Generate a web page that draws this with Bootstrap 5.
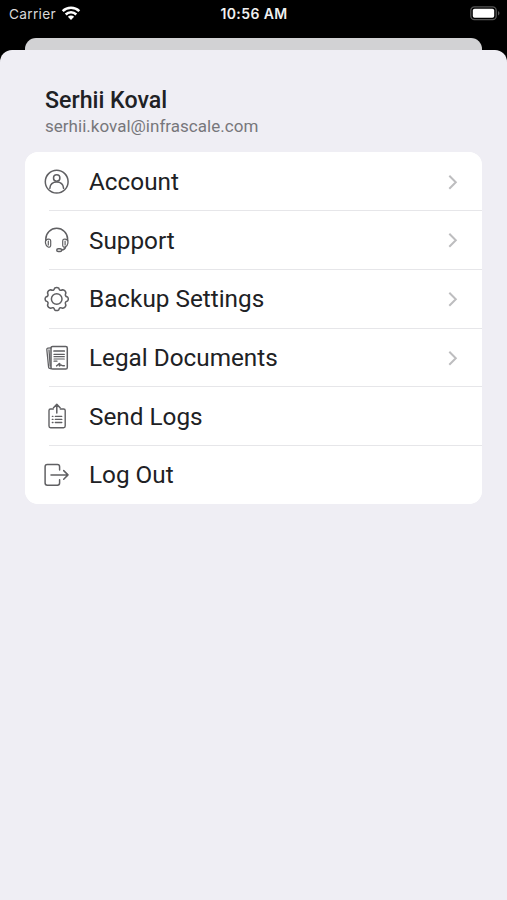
<!DOCTYPE html>
<html lang="en">
<head>
<meta charset="utf-8">
<meta name="viewport" content="width=device-width, initial-scale=1">
<title>Settings</title>
<link href="https://cdn.jsdelivr.net/npm/bootstrap@5.3.0/dist/css/bootstrap.min.css" rel="stylesheet">
<style>
body{background:#000;font-family:Roboto,sans-serif;color:#202124;overflow:hidden}
svg{display:block;flex:none}
.status-bar{height:38px;padding:6px 6px 0 9px;font-family:Inter,sans-serif;color:#fff;line-height:16px}
.status-side{width:100px}
.carrier{font-size:13.7px;letter-spacing:.3px;color:#d8d8d8}
.wifi{margin-left:5px}
.clock{font-size:14px;font-weight:600;letter-spacing:.4px;color:#f0f0f0;margin-right:2px}
.back-sheet{height:12px;margin:0 25px;background:#d2d2d4;border-radius:11px 11px 0 0}
.sheet{background:#efeef4;border-radius:12px 12px 0 0;padding:36px 25px 0}
.profile{padding-left:20px;height:66.200px}
.profile-name{font-size:23.2px;line-height:28px;font-weight:500}
.profile-mail{font-size:17px;letter-spacing:.02px;line-height:20px;color:#77777b;margin-top:2px}
.menu{--bs-list-group-border-radius:13px;height:352px;overflow:hidden;background:#fff}
.menu .list-group-item{flex:1 1 0;padding:0 19px 0 19px;border:0;color:#202124;background:#fff;position:relative}
.menu .list-group-item+.list-group-item::before{content:"";position:absolute;left:24px;right:0;top:-.6px;height:1px;background:#e6e6e9}
.menu-label{font-size:24.3px;line-height:30px;margin-left:19px;padding-top:1px}
.menu-icon{fill:none;stroke:#606063;stroke-width:1.5;stroke-linecap:round;stroke-linejoin:round}
.chevron{fill:none;stroke:#bdbdbf;stroke-width:2}
</style>
</head>
<body>
<div class="d-flex flex-column vh-100">
  <header class="status-bar d-flex justify-content-between align-items-start">
    <div class="status-side d-flex">
      <span class="carrier">Carrier</span>
      <svg class="wifi" width="20" height="16" viewBox="0 0 20 16" fill="none" stroke="#fff" stroke-width="2.5"><path d="M1.700 5.200a11.800 11.800 0 0 1 16.600 0M4.700 8.500a7.500 7.500 0 0 1 10.600 0"/><path d="M6.900 10.800a4.400 4.400 0 0 1 6.200 0L10 14z" fill="#fff" stroke="none"/></svg>
    </div>
    <span class="clock">10:56 AM</span>
    <div class="status-side d-flex justify-content-end">
      <svg width="32" height="16" viewBox="0 0 32 16"><rect x="1.800" y=".8" width="25.400" height="12.800" rx="3.600" fill="none" stroke="#555" stroke-width="1.300"/><rect x="3.800" y="2.700" width="21.400" height="9" rx="1.800" fill="#fff"/><path d="M29 5c2 1 2 3.500 0 4.500z" fill="#555"/></svg>
    </div>
  </header>
  <div class="back-sheet flex-shrink-0"></div>
  <main class="sheet flex-grow-1">
    <div class="profile">
      <div class="profile-name">Serhii Koval</div>
      <div class="profile-mail">serhii.koval@infrascale.com</div>
    </div>
    <div class="list-group menu">
      <a class="list-group-item d-flex align-items-center">
        <svg class="menu-icon" width="26" height="26" viewBox="0 0 26 26"><circle cx="12.700" cy="12.700" r="11.400"/><circle cx="12.700" cy="9" r="3.200"/><path d="M5.800 19.300c.4-3.800 3.200-6.200 6.900-6.200s6.500 2.400 6.900 6.200"/></svg>
        <span class="menu-label">Account</span>
        <svg class="chevron ms-auto" width="20" height="20" viewBox="0 0 20 20"><path d="m6.300 3.700 6.500 6.500-6.500 6.500"/></svg>
      </a>
      <a class="list-group-item d-flex align-items-center">
        <svg class="menu-icon" width="26" height="26" viewBox="0 0 26 26"><path d="M1.800 13.500V12a10.900 10.700 0 0 1 21.800 0v1.500"/><path d="M3 12.400C1.500 13 1.200 14.500 1.500 16.200C1.800 18 2.500 19.400 4 20C5.500 20.500 6.700 19.800 6.700 18.300V14C6.700 12.300 5.200 11.700 3 12.400ZM22.400 12.400C23.900 13 24.200 14.500 23.900 16.200C23.600 18 22.900 19.400 21.400 20C19.900 20.500 18.700 19.800 18.700 18.300V14C18.700 12.300 20.200 11.700 22.400 12.400ZM4.300 14.200v3.800M21.100 14.200v3.800" stroke-width="1.200"/><path d="M21.600 20c-.5 1.800-1.700 2.800-4 3"/><rect x="12.800" y="21.700" width="4.800" height="2.900" rx="1.400"/></svg>
        <span class="menu-label">Support</span>
        <svg class="chevron ms-auto" width="20" height="20" viewBox="0 0 20 20"><path d="m6.300 3.700 6.500 6.500-6.500 6.500"/></svg>
      </a>
      <a class="list-group-item d-flex align-items-center">
        <svg class="menu-icon" width="26" height="26" viewBox="0 0 26 26"><circle cx="12.700" cy="13" r="5.300"/><path d="M10.600 2.200Q12.700.6 14.800 2.200Q15.400 5.400 18.800 3.800Q21.400 4.300 21.900 6.900Q20.300 10.300 23.500 10.900Q25.100 13 23.500 15.100Q20.300 15.700 21.900 19.100Q21.400 21.700 18.800 22.200Q15.400 20.600 14.800 23.800Q12.700 25.400 10.600 23.800Q10 20.600 6.600 22.200Q4 21.700 3.500 19.100Q5.100 15.700 1.900 15.100Q.3 13 1.900 10.900Q5.100 10.300 3.500 6.900Q4 4.300 6.600 3.800Q10 5.400 10.600 2.200Z"/></svg>
        <span class="menu-label">Backup Settings</span>
        <svg class="chevron ms-auto" width="20" height="20" viewBox="0 0 20 20"><path d="m6.300 3.700 6.500 6.500-6.500 6.500"/></svg>
      </a>
      <a class="list-group-item d-flex align-items-center">
        <svg class="menu-icon" width="26" height="26" viewBox="0 0 26 26"><rect x="7" y="1.400" width="16.300" height="22.600" rx="1.600"/><path d="M7 2.800 3.800 3.200Q2.700 3.400 2.800 4.500L4.600 22.300Q4.800 23.700 7 23.500M5 5l1.200 16" stroke-width="1.300"/><path d="M10 6h10.300" stroke-width="1.700"/><path d="M10 9.400h10.300M10 11.700h10.300M10 14h10.300M10 16.200h3" stroke-width="1.200"/><path d="M12.600 20.900c1.500-1 2.600-2.500 3.100-2.300.5.300-.7 2.200-.1 2.300.6 0 1-1.200 1.500-1 .5.100.1 1.100 3.200.9" stroke-width="1.500"/></svg>
        <span class="menu-label">Legal Documents</span>
        <svg class="chevron ms-auto" width="20" height="20" viewBox="0 0 20 20"><path d="m6.300 3.700 6.500 6.500-6.500 6.500"/></svg>
      </a>
      <a class="list-group-item d-flex align-items-center">
        <svg class="menu-icon" width="26" height="26" viewBox="0 0 26 26"><path d="M9.300 6H6.600Q5 6 5 7.600V23.100Q5 24.700 6.600 24.700H19.600Q21.200 24.700 21.200 23.100V7.600Q21.200 6 19.600 6H16.300" stroke-width="1.400"/><path d="M12.800 10V1.500M9.500 4.700l3.300-3.300 3.300 3.300"/><path d="M8.300 13.300h.7M8.300 16.400h.7M8.300 19.500h.7M11.300 13.300h6.500M11.300 16.400h6.500M11.300 19.500h6.500" stroke-width="1.300"/></svg>
        <span class="menu-label">Send Logs</span>
      </a>
      <a class="list-group-item d-flex align-items-center">
        <svg class="menu-icon" width="26" height="26" viewBox="0 0 26 26"><path d="M15.600 8V4.700Q15.600 2.500 13.400 2.500H3.300Q1.100 2.500 1.100 4.700V21Q1.100 23.200 3.300 23.200H13.400Q15.600 23.200 15.600 21V17.700M7 12.900H23.800M19.700 8.600 24 12.900l-4.300 4.300"/></svg>
        <span class="menu-label">Log Out</span>
      </a>
    </div>
  </main>
</div>
<script src="https://cdn.jsdelivr.net/npm/bootstrap@5.3.0/dist/js/bootstrap.bundle.min.js"></script>
</body>
</html>
